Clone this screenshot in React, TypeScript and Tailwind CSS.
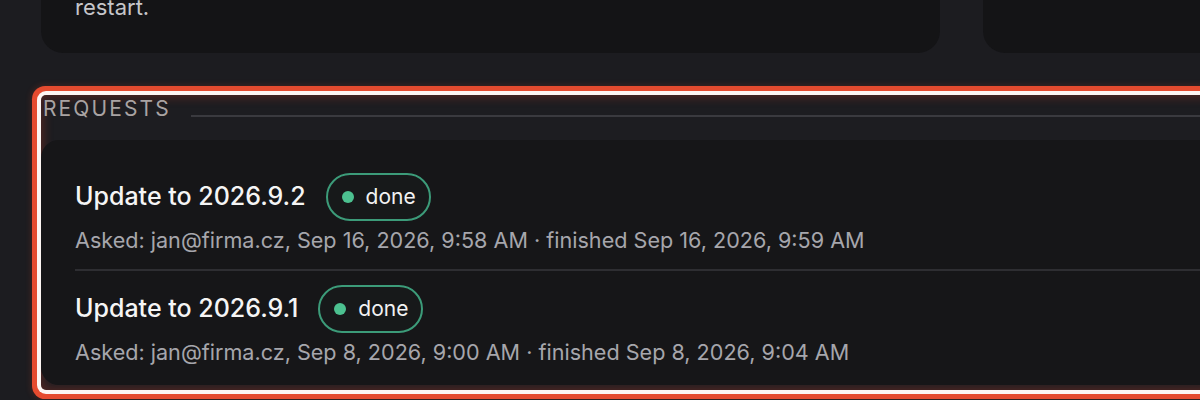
const requests = [
  {
    id: 1,
    title: "Update to 2026.9.2",
    status: "done",
    meta: "Asked: jan@firma.cz, Sep 16, 2026, 9:58 AM · finished Sep 16, 2026, 9:59 AM",
  },
  {
    id: 2,
    title: "Update to 2026.9.1",
    status: "done",
    meta: "Asked: jan@firma.cz, Sep 8, 2026, 9:00 AM · finished Sep 8, 2026, 9:04 AM",
  },
];

function StatusBadge({ label }: { label: string }) {
  return (
    <span className="inline-flex h-[48px] items-center gap-[12px] rounded-full border-2 border-[#3c9b79] bg-[#17191a] pl-[14px] pr-[13px] text-[21px] text-[#f2f2f2]">
      <span className="h-[12px] w-[12px] rounded-full bg-[#4cc190]" />
      {label}
    </span>
  );
}

export default function App() {
  return (
    <div
      className="h-[400px] w-[1200px] overflow-hidden bg-[#1c1c20]"
      style={{ fontFamily: "Inter, 'Noto Sans', sans-serif" }}
    >
      <div className="w-[1500px] px-[41px]">
        {/* cards above, mostly scrolled out of view */}
        <div className="mt-[-68px] grid grid-cols-[899px_1fr] gap-[43px]">
          <div className="rounded-[22px] bg-[#141416] px-[34px] pt-[33px] pb-[32px]">
            <p className="text-[22px] leading-[28px] text-[#c6c6ca]">
              The new version is applied automatically after the next
              <br />
              restart.
            </p>
          </div>
          <div className="rounded-[22px] bg-[#141416]" />
        </div>

        <section className="mt-[42px] rounded-[5px] bg-[#1d1d21] pb-[5px] shadow-[0_0_0_4px_#fdf6f3,0_0_0_9px_#e54b2f,0_0_6px_10px_rgba(229,75,47,0.18),inset_0_0_10px_3px_rgba(200,60,40,0.28)]">
          <div className="flex items-end gap-[20px] pl-[2px] pt-[2px]">
            <h2 className="text-[21px] leading-[24px] tracking-[0.1em] text-[#a9a3a3]">
              REQUESTS
            </h2>
            <div className="mb-[4px] h-[2px] flex-1 bg-[#3a3a3f]" />
          </div>

          <div className="mt-[19px] rounded-[18px] bg-[#161618] px-[34px] pt-[19px] pb-[4px]">
            {requests.map((r, i) => (
              <div
                key={r.id}
                className={
                  i > 0
                    ? "border-t-2 border-[#2e2e32] pt-[14px] pb-[16px]"
                    : "pt-[14px] pb-[16px]"
                }
              >
                <div className="flex items-center gap-[20px]">
                  <span className="text-[25px] font-medium text-[#f5f5f5]">
                    {r.title}
                  </span>
                  <StatusBadge label={r.status} />
                </div>
                <p className="mt-[6px] text-[21.6px] leading-[26px] text-[#a6a6ac]">
                  {r.meta}
                </p>
              </div>
            ))}
          </div>
        </section>
      </div>
    </div>
  );
}
